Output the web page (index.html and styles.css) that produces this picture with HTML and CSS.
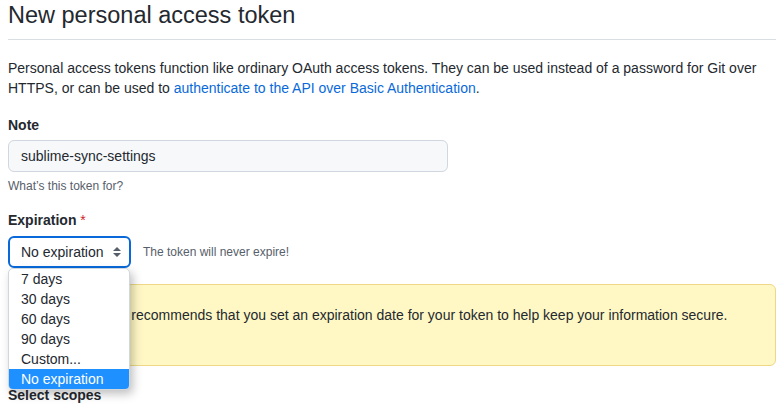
FILE: index.html
```html
<!DOCTYPE html>
<html lang="en">
<head>
  <meta charset="UTF-8">
  <title>New personal access token</title>
  <meta name="viewport" content="width=device-width, initial-scale=1">
  <link rel="stylesheet" href="styles.css">
</head>
<body>
  <div class="page">
    <h2 class="subhead">New personal access token</h2>
    <p class="intro">Personal access tokens function like ordinary OAuth access tokens. They can be used instead of a password for Git over<br>HTTPS, or can be used to <a href="#">authenticate to the API over Basic Authentication</a>.</p>

    <label class="field-label" for="note">Note</label>
    <input class="form-control" id="note" type="text" value="sublime-sync-settings">
    <p class="note">What’s this token for?</p>

    <label class="field-label field-label--gap">Expiration <span class="required">*</span></label>
    <div class="expiry-row">
      <div class="select-wrap">
        <div class="select">
          No expiration
          <svg class="select-arrows" width="8" height="10" viewBox="0 0 8 10"><path d="M4 0 L8 4 H0 Z M0 6 H8 L4 10 Z" fill="#57606a"/></svg>
        </div>
        <ul class="select-menu">
          <li>7 days</li>
          <li>30 days</li>
          <li>60 days</li>
          <li>90 days</li>
          <li>Custom...</li>
          <li class="selected">No expiration</li>
        </ul>
      </div>
      <span class="note note--inline">The token will never expire!</span>
    </div>

    <div class="flash-warn">
      GitHub strongly recommends that you set an expiration date for your token to help keep your information secure.
    </div>

    <h3 class="scopes-title">Select scopes</h3>
  </div>
</body>
</html>
```

FILE: styles.css
```css
* {
  box-sizing: border-box;
}
body {
  margin: 0;
  background: #fff;
  color: #24292f;
  font-family: "Liberation Sans", Arial, sans-serif;
  font-size: 14px;
  line-height: 20px;
}
.page {
  padding: 0 7px 0 8px;
}
a {
  color: #0969da;
  text-decoration: none;
}
.subhead {
  margin: 0;
  font-size: 23.5px;
  font-weight: 400;
  line-height: 30px;
  padding-bottom: 9px;
  border-bottom: 1px solid #d8dee4;
}
.intro {
  margin: 18px 0 0;
}
.field-label {
  display: block;
  margin-top: 17px;
  font-weight: 700;
}
.field-label--gap {
  margin-top: 15px;
}
.required {
  color: #cf222e;
  font-weight: 400;
}
.form-control {
  display: block;
  margin-top: 5px;
  width: 440px;
  height: 32px;
  padding: 0 12px;
  font: inherit;
  color: #24292f;
  background: #f6f8fa;
  border: 1px solid #d0d7de;
  border-radius: 6px;
}
.note {
  margin: 5px 0 0;
  font-size: 12px;
  line-height: 18px;
  color: #57606a;
}
.note--inline {
  margin: 0;
}
.expiry-row {
  display: flex;
  align-items: center;
  gap: 12px;
  margin-top: 6px;
}
.select-wrap {
  position: relative;
}
.select {
  display: flex;
  align-items: center;
  justify-content: space-between;
  width: 123px;
  height: 32px;
  padding: 0 8px 0 11px;
  border: 2px solid #0969da;
  border-radius: 6px;
  background: #fff;
}
.select-menu {
  position: absolute;
  top: 32px;
  left: 0;
  z-index: 2;
  width: 122px;
  margin: 0;
  padding: 0;
  list-style: none;
  background: #fff;
  border: 1px solid #d0d7de;
  border-radius: 5px;
  overflow: hidden;
  box-shadow: 3px 4px 10px rgba(0, 0, 0, 0.25);
}
.select-menu li {
  height: 20px;
  padding-left: 12px;
  line-height: 20px;
}
.select-menu .selected {
  background: #1e90ff;
  color: #fff;
}
.flash-warn {
  margin-top: 16px;
  padding: 20px 16px 40px 22px;
  background: #fff8c5;
  border: 1px solid #eed888;
  border-radius: 6px;
}
.scopes-title {
  margin: 19px 0 0;
  font-size: 14px;
  font-weight: 700;
  line-height: 20px;
}
```
